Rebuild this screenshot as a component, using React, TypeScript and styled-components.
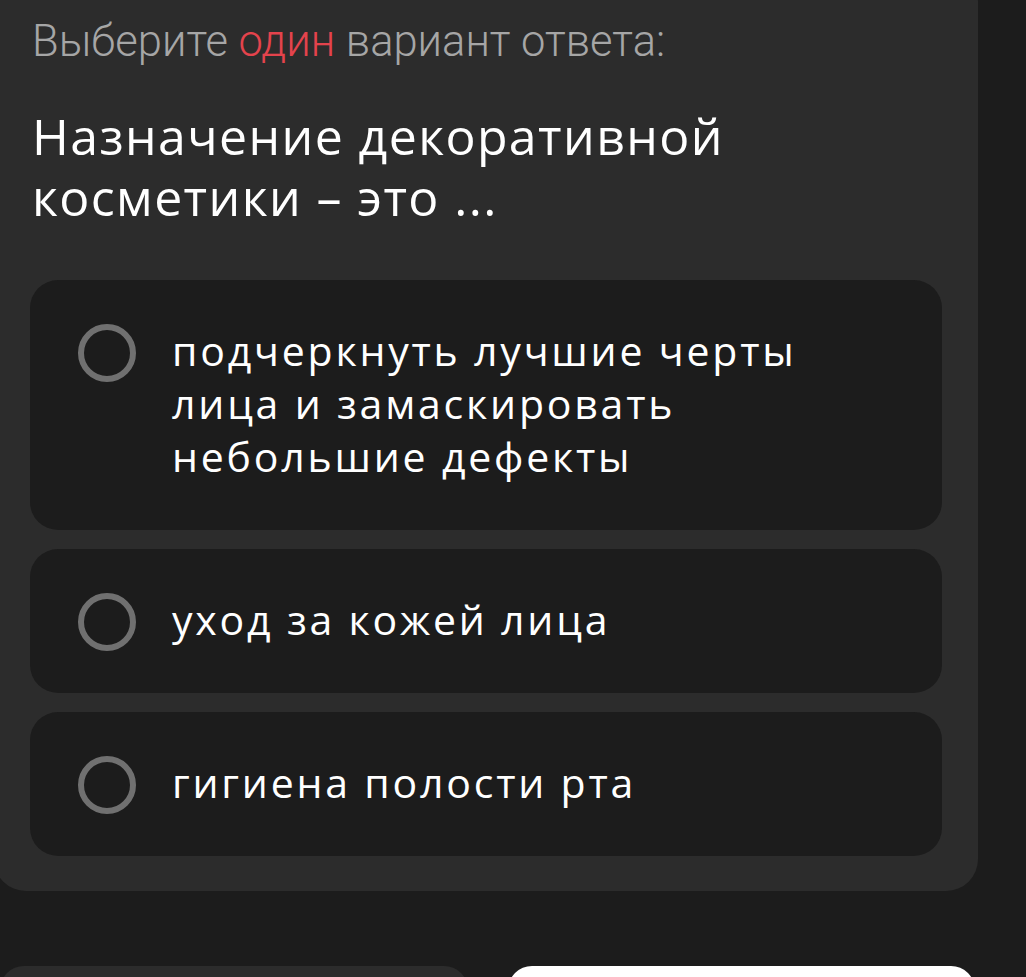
import React from 'react';
import styled, { createGlobalStyle } from 'styled-components';

const GlobalStyle = createGlobalStyle`
  html, body {
    margin: 0;
    padding: 0;
    background: #1c1c1c;
    overflow: hidden;
  }
`;

const Page = styled.div`
  width: 1026px;
  height: 977px;
  overflow: hidden;
  background: #1c1c1c;
`;

const Card = styled.section`
  margin: -30px 0 0 -6px;
  width: 984px;
  box-sizing: border-box;
  padding: 50px 36px 35px 36px;
  background: #2c2c2c;
  border-radius: 32px;
`;

const Hint = styled.div`
  font-family: Roboto, "Noto Sans", sans-serif;
  font-weight: 300;
  font-size: 43.5px;
  line-height: 44px;
  color: #a6a6a6;
  padding-left: 2px;
`;

const Accent = styled.span`
  color: #e4434c;
`;

const Question = styled.h1`
  margin: 42px 0 0 2px;
  max-width: 760px;
  font-family: "Open Sans", "Noto Sans", sans-serif;
  font-weight: 500;
  font-size: 50px;
  line-height: 61px;
  letter-spacing: 1.4px;
  color: #ffffff;
`;

const Options = styled.div`
  margin-top: 52px;
  display: flex;
  flex-direction: column;
  gap: 19px;
`;

const Option = styled.label`
  display: flex;
  align-items: flex-start;
  gap: 36px;
  padding: 44px 40px 47px 48px;
  background: #1c1c1c;
  border-radius: 28px;
  cursor: pointer;
`;

const Radio = styled.span`
  flex: none;
  width: 46px;
  height: 46px;
  margin-bottom: -6px;
  border: 6px solid #707070;
  border-radius: 50%;
`;

const OptionText = styled.span`
  font-family: "Open Sans", "Noto Sans", sans-serif;
  font-weight: 400;
  font-size: 41px;
  line-height: 53px;
  letter-spacing: 2.8px;
  color: #ffffff;
  max-width: 680px;
`;

const Footer = styled.div`
  margin-top: 75px;
  display: flex;
  gap: 40px;
  padding-right: 51px;
`;

const FooterButton = styled.button<{ $light?: boolean }>`
  flex: 1;
  height: 80px;
  border: none;
  border-radius: 24px;
  background: ${(p) => (p.$light ? '#ffffff' : '#2c2c2c')};
`;

const answers = [
  'подчеркнуть лучшие черты лица и замаскировать небольшие дефекты',
  'уход за кожей лица',
  'гигиена полости рта',
];

const App = () => {
  return (
    <Page>
      <GlobalStyle />
      <Card>
        <Hint>
          Выберите <Accent>один</Accent> вариант ответа:
        </Hint>
        <Question>Назначение декоративной косметики – это ...</Question>
        <Options>
          {answers.map((a) => (
            <Option key={a}>
              <Radio />
              <OptionText>{a}</OptionText>
            </Option>
          ))}
        </Options>
      </Card>
      <Footer>
        <FooterButton />
        <FooterButton $light />
      </Footer>
    </Page>
  );
};

export default App;
